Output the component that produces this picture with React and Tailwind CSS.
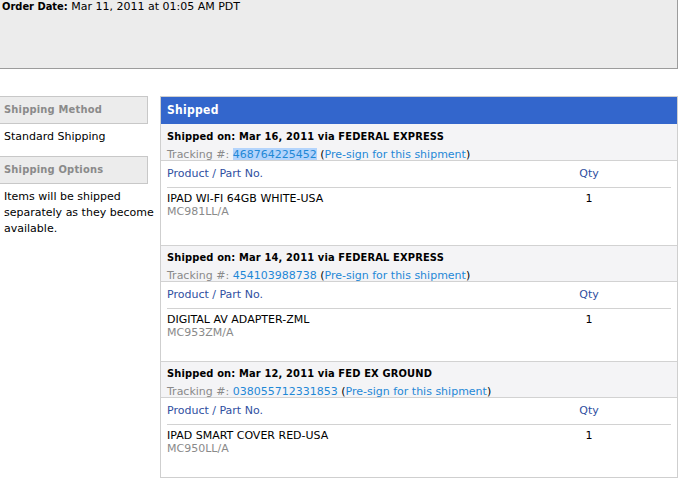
const shipments = [
  {
    date: 'Mar 16, 2011',
    carrier: 'FEDERAL EXPRESS',
    tracking: '468764225452',
    selected: true,
    name: 'IPAD WI-FI 64GB WHITE-USA',
    part: 'MC981LL/A',
    qty: 1,
  },
  {
    date: 'Mar 14, 2011',
    carrier: 'FEDERAL EXPRESS',
    tracking: '454103988738',
    name: 'DIGITAL AV ADAPTER-ZML',
    part: 'MC953ZM/A',
    qty: 1,
  },
  {
    date: 'Mar 12, 2011',
    carrier: 'FED EX GROUND',
    tracking: '038055712331853',
    name: 'IPAD SMART COVER RED-USA',
    part: 'MC950LL/A',
    qty: 1,
  },
];

// bold text in the shot is narrower than DejaVu Sans Bold, so use the condensed cut
const bold = "font-['DejaVu_Sans_Condensed','DejaVu_Sans',sans-serif] font-bold";

function SideHeader({ children }) {
  return (
    <div className={`h-[28px] border border-l-0 border-[#c8c8c8] bg-[#ececec] pl-[4px] text-[11px] leading-[26px] tracking-[0.2px] text-[#8a8a8a] ${bold}`}>
      {children}
    </div>
  );
}

function Shipment({ s, first }) {
  return (
    <div className={first ? '' : 'border-t border-[#d2d2d2]'}>
      <div
        className={`${first ? 'h-[37px]' : 'h-[36px]'} overflow-hidden border-b border-[#d2d2d2] bg-[#f4f4f6] px-[6px] ${first ? 'pt-[4px]' : 'pt-[3px]'}`}
      >
        <div className={`text-[11px] leading-[18px] tracking-[0.15px] text-black ${bold}`}>
          Shipped on: {s.date} via {s.carrier}
        </div>
        <div className="text-[11px] leading-[18px] text-[#8a8a8a]">
          Tracking #:{' '}
          <span className={s.selected ? 'bg-[#b3d4fc] text-[#1f88d6]' : 'text-[#1f88d6]'}>{s.tracking}</span>{' '}
          <span className="text-black">(</span>
          <span className="text-[#1f88d6]">Pre-sign for this shipment</span>
          <span className="text-black">)</span>
        </div>
      </div>
      <div className={first ? 'mx-[6px] pb-[27px]' : 'mx-[6px] pb-[22px]'}>
        <div className="flex h-[27px] border-b border-[#d2d2d2] pt-[4px] text-[11px] leading-[18px] text-[#2f4f9f]">
          <div className="flex-1">Product / Part No.</div>
          <div className="w-[60px] text-center">Qty</div>
          <div className="w-[52px]" />
        </div>
        <div className="flex pt-[4px] text-[11px] leading-[13px]">
          <div className="flex-1">
            <div className="text-black">{s.name}</div>
            <div className="text-[#8a8a8a]">{s.part}</div>
          </div>
          <div className="w-[60px] text-center text-black">{s.qty}</div>
          <div className="w-[52px]" />
        </div>
      </div>
    </div>
  );
}

export default function App() {
  return (
    <div className="h-[500px] w-[685px] overflow-hidden bg-white font-['DejaVu_Sans',sans-serif] text-black">
      <div className="h-[69px] w-[678px] border-r border-b border-[#9c9c9c] bg-[#ececec] px-[2px] text-[11px] leading-[14px]">
        <span className={bold}>Order Date:</span> Mar 11, 2011 at 01:05 AM PDT
      </div>

      <div className="mt-[27px] flex gap-[12px]">
        <aside className="w-[148px]">
          <SideHeader>Shipping Method</SideHeader>
          <div className="pl-[4px] pt-[5px] pb-[11px] text-[11px] leading-[16px]">Standard Shipping</div>
          <SideHeader>Shipping Options</SideHeader>
          <div className="whitespace-nowrap pl-[4px] pt-[5px] text-[11px] leading-[16px]">
            Items will be shipped
            <br />
            separately as they become
            <br />
            available.
          </div>
        </aside>

        <section className="w-[518px] border border-[#cfcfcf]">
          <div className={`h-[27px] bg-[#3366cc] px-[6px] text-[12px] leading-[27px] tracking-[0.3px] text-white ${bold}`}>
            Shipped
          </div>
          {shipments.map((s, i) => (
            <Shipment key={s.tracking} s={s} first={i === 0} />
          ))}
        </section>
      </div>
    </div>
  );
}
